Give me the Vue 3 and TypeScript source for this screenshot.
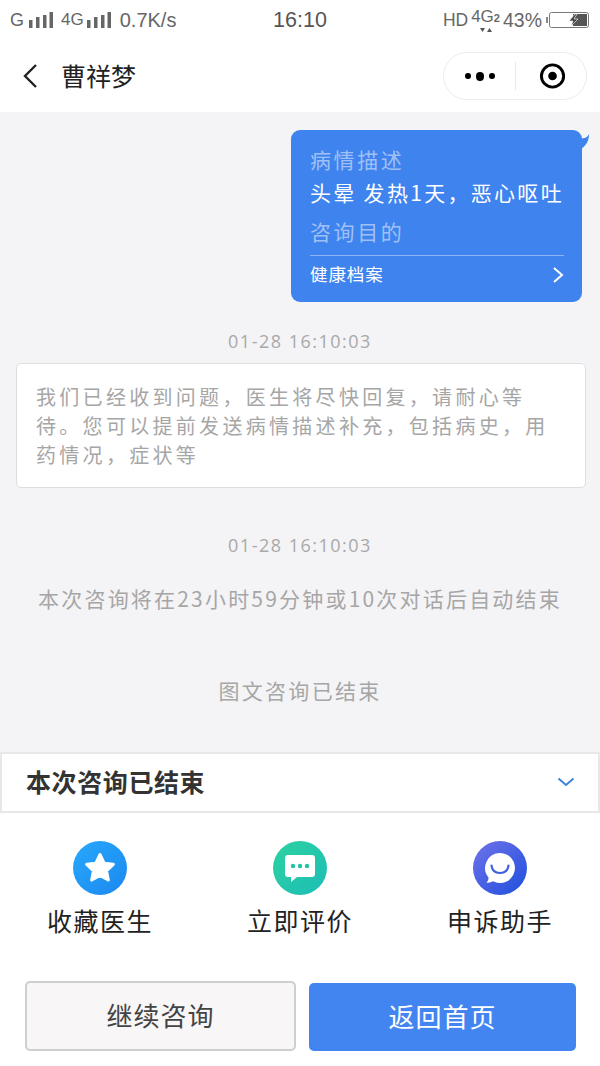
<script setup lang="ts">
const actions = [
  { label: '收藏医生', icon: 'star' },
  { label: '立即评价', icon: 'talk' },
  { label: '申诉助手', icon: 'smile' },
]
</script>

<template>
  <div class="page">
    <div class="status">
      <div class="st-left">
        <span>G</span>
        <svg class="bars" width="24" height="18" viewBox="0 0 24 18"><path d="M0 9h3.500v8H0zM7 6h3.500v11H7zM14 4h3.500v13H14zM20.500 1H24v16h-3.500z" fill="#666"/></svg>
        <span class="four">4G</span>
        <svg class="bars" width="24" height="18" viewBox="0 0 24 18"><path d="M0 9h3.500v8H0zM7 6h3.500v11H7zM14 4h3.500v13H14zM20.500 1H24v16h-3.500z" fill="#666"/></svg>
        <span class="speed">0.7K/s</span>
      </div>
      <div class="st-time">16:10</div>
      <div class="st-right">
        <span class="hd">HD</span>
        <span class="net">4G<small>2</small>
          <svg class="arrows" width="12" height="6" viewBox="0 0 12 6"><path d="M0 1h5L2.500 5zM7 5h5L9.500 1z" fill="#555"/></svg>
        </span>
        <span class="pct">43%</span>
        <svg class="battery" width="44" height="18" viewBox="0 0 44 18">
          <rect x="0" y="6" width="2" height="6" fill="#888"/>
          <rect x="3.500" y="1.500" width="39" height="15" rx="2" fill="#fff" stroke="#777"/>
          <rect x="27" y="3" width="14" height="12" fill="#555"/>
          <path d="M29 3l-6 7h4l-2 5 7-7h-4l3-5z" fill="#444" stroke="#fff" stroke-width=".6"/>
        </svg>
      </div>
    </div>

    <header class="nav">
      <svg class="back" width="16" height="26" viewBox="0 0 16 26"><path d="M14 2 3 13l11 11" fill="none" stroke="#222" stroke-width="2.400"/></svg>
      <span class="title">曹祥梦</span>
      <div class="capsule">
        <div class="dots"><i></i><i class="big"></i><i></i></div>
        <span class="sep"></span>
        <svg width="28" height="28" viewBox="0 0 28 28"><circle cx="14" cy="14" r="11.500" fill="none" stroke="#000" stroke-width="3"/><circle cx="14" cy="14" r="4.500" fill="#000"/></svg>
      </div>
    </header>

    <main class="thread">
      <div class="bubble">
        <div class="b-label">病情描述</div>
        <div class="b-text">头晕 发热1天，恶心呕吐</div>
        <div class="b-label second">咨询目的</div>
        <div class="b-foot">
          <span>健康档案</span>
          <svg class="go" width="12" height="18" viewBox="0 0 12 18"><path d="M2 2l8 7-8 7" fill="none" stroke="#fff" stroke-width="2"/></svg>
        </div>
        <svg class="tail" width="10" height="16" viewBox="0 0 10 16"><path d="M0 5C3 6 6 5 8 1 8 7 6 12 0 16z" fill="#3f83ee"/></svg>
      </div>

      <div class="stamp first">01-28 16:10:03</div>
      <div class="card">我们已经收到问题，医生将尽快回复，请耐心等待。您可以提前发送病情描述补充，包括病史，用药情况，症状等</div>
      <div class="stamp second">01-28 16:10:03</div>
      <div class="note">本次咨询将在23小时59分钟或10次对话后自动结束</div>
      <div class="ended">图文咨询已结束</div>
    </main>

    <div class="finish">
      <span>本次咨询已结束</span>
      <svg width="18" height="10" viewBox="0 0 18 10"><path d="M1.500 1.500 9 8l7.500-6.500" fill="none" stroke="#3f83d8" stroke-width="2"/></svg>
    </div>

    <section class="actions">
      <div v-for="a in actions" :key="a.label" class="action">
        <div class="ic" :class="a.icon">
          <svg v-if="a.icon === 'star'" width="36" height="36" viewBox="0 0 34 34"><path d="M17 4.500l3.800 8 8.700 1.100-6.400 6 1.700 8.700L17 24l-7.800 4.300 1.700-8.700-6.400-6 8.700-1.100z" fill="#fff" stroke="#fff" stroke-width="3" stroke-linejoin="round"/></svg>
          <svg v-else-if="a.icon === 'talk'" width="34" height="30" viewBox="0 0 34 30"><path d="M5 2h24a3 3 0 0 1 3 3v16a3 3 0 0 1-3 3H14l-6 5v-5H5a3 3 0 0 1-3-3V5a3 3 0 0 1 3-3z" fill="#fff"/><circle cx="10" cy="13" r="2.200" fill="#22c4a6"/><circle cx="17" cy="13" r="2.200" fill="#22c4a6"/><circle cx="24" cy="13" r="2.200" fill="#22c4a6"/></svg>
          <svg v-else width="34" height="34" viewBox="0 0 34 34"><path d="M17 2a15 15 0 1 1-7 28.300C8 31.500 5.500 32 3.500 31.500 5 30 5.700 28 5.500 26.500A15 15 0 0 1 17 2z" fill="#fff"/><path d="M8.500 14.500c.5 5 4 7.500 8.500 7.500s8-2.500 8.500-7.500" fill="none" stroke="#3d5fe0" stroke-width="2.200" stroke-linecap="round"/></svg>
        </div>
        <div class="a-label">{{ a.label }}</div>
      </div>
    </section>

    <footer class="btns">
      <div class="btn ghost">继续咨询</div>
      <div class="btn primary">返回首页</div>
    </footer>
  </div>
</template>

<style scoped>
.page {
  width: 600px;
  height: 1066px;
  overflow: hidden;
  background: #fff;
  display: flex;
  flex-direction: column;
  font-family: "Noto Sans CJK SC", "Noto Sans", sans-serif;
}
.status {
  height: 40px;
  flex: none;
  display: grid;
  grid-template-columns: 1fr auto 1fr;
  align-items: center;
  padding: 0 10px;
  color: #666;
  font-family: "Liberation Sans", sans-serif;
  font-size: 18px;
}
.st-left { display: flex; align-items: center; gap: 5px; }
.four { font-size: 17px; margin-left: 3px; margin-right: -2px; }
.speed { margin-left: 4px; font-size: 20px; }
.bars { display: block; }
.st-time { font-size: 21.500px; color: #555; }
.st-right { display: flex; align-items: center; justify-content: flex-end; gap: 3px; }
.hd { font-size: 17.500px; }
.net { position: relative; font-size: 17px; padding-bottom: 6px; }
.net small { font-size: 11px; font-weight: 700; }
.arrows { position: absolute; left: 9px; bottom: 0; }
.pct { font-size: 19.500px; }
.st-right .battery { margin-left: 1px; }

.nav {
  height: 72px;
  flex: none;
  display: flex;
  align-items: center;
  padding: 0 13px 0 22px;
}
.title { margin-left: 23px; margin-bottom: 3px; font-size: 25px; color: #222; }
.capsule {
  margin-left: auto;
  width: 144px;
  height: 48px;
  box-sizing: border-box;
  border: 1px solid #ececec;
  border-radius: 24px;
  display: flex;
  align-items: center;
  padding: 0 20px 0 21px;
}
.dots { display: flex; align-items: center; gap: 5px; width: 30px; }
.dots i { width: 6px; height: 6px; border-radius: 50%; background: #000; }
.dots i.big { width: 9px; height: 9px; }
.sep { width: 1px; height: 28px; background: #e8e8e8; margin: 0 23px 0 20px; }

.thread {
  flex: 1;
  background: #f4f4f6;
  display: flex;
  flex-direction: column;
  padding-top: 18px;
}
.bubble {
  position: relative;
  align-self: flex-end;
  width: 291px;
  height: 172px;
  box-sizing: border-box;
  margin-right: 18px;
  padding: 14px 18px 0 19px;
  border-radius: 9px;
  background: #3f83ee;
  color: #fff;
  font-size: 21px;
  letter-spacing: 2.600px;
}
.b-label { color: #9fc0f6; line-height: 31px; height: 31px; }
.b-text { line-height: 35px; height: 35px; white-space: nowrap; letter-spacing: 2.300px; }
.b-label.second { margin-top: 6px; }
.b-foot {
  margin-top: 8px;
  border-top: 1px solid #8db4f3;
  height: 38px;
  display: flex;
  align-items: center;
  justify-content: space-between;
  font-size: 17.500px;
  letter-spacing: 0.900px;
  padding-bottom: 3px;
  box-sizing: border-box;
}
.go { margin-top: 3px; }
.tail { position: absolute; right: -9px; top: 3px; }

.stamp {
  text-align: center;
  font-family: "Open Sans", sans-serif;
  font-size: 18px;
  letter-spacing: 1.500px;
  color: #a9a9a9;
  line-height: 24px;
}
.stamp.first { margin-top: 27px; }
.stamp.second { margin-top: 45px; }
.card {
  margin: 10px 14px 0 16px;
  height: 125px;
  box-sizing: border-box;
  padding: 18px 20px 0 19px;
  background: #fff;
  border: 1px solid #dedede;
  border-radius: 5px;
  color: #a6a6a6;
  font-size: 20px;
  line-height: 29px;
  letter-spacing: 3.300px;
}
.note {
  margin-top: 26px;
  text-align: center;
  color: #a6a6a6;
  font-size: 21px;
  line-height: 30px;
  letter-spacing: 2.200px;
  white-space: nowrap;
}
.ended {
  margin-top: 62px;
  text-align: center;
  color: #a6a6a6;
  font-size: 21px;
  line-height: 30px;
  letter-spacing: 2.300px;
}
.finish {
  flex: none;
  height: 61px;
  box-sizing: border-box;
  border: 2px solid #e8e8e8;
  background: #fff;
  display: flex;
  align-items: center;
  justify-content: space-between;
  padding: 0 23px 4px 24px;
  font-size: 25px;
  font-weight: 700;
  letter-spacing: 0.600px;
  color: #333;
}
.finish svg { margin-top: 2px; }
.actions {
  flex: none;
  height: 168px;
  display: grid;
  grid-template-columns: repeat(3, 1fr);
  padding-top: 28px;
  box-sizing: border-box;
}
.action { display: flex; flex-direction: column; align-items: center; }
.ic {
  width: 54px;
  height: 54px;
  border-radius: 50%;
  display: flex;
  align-items: center;
  justify-content: center;
}
.ic.star { background: linear-gradient(135deg, #28a8fb, #1b88f0); }
.ic.talk { background: linear-gradient(135deg, #2dd2a0, #1cbdb6); }
.ic.smile { background: linear-gradient(135deg, #7172ea, #1d4fdc); }
.a-label {
  margin-top: 7px;
  font-size: 25px;
  line-height: 36px;
  letter-spacing: 1.500px;
  color: #222;
  white-space: nowrap;
}
.btns {
  flex: none;
  height: 85px;
  display: flex;
  gap: 13px;
  padding: 0 24px 0 25px;
  box-sizing: border-box;
}
.btn {
  height: 68px;
  display: flex;
  align-items: center;
  justify-content: center;
  box-sizing: border-box;
  border-radius: 5px;
  padding-bottom: 3px;
  font-size: 26px;
  letter-spacing: 1px;
}
.ghost {
  width: 271px;
  height: 70px;
  background: #f8f6f7;
  border: 2px solid #cfcfcf;
  color: #444;
}
.primary {
  width: 267px;
  margin-top: 2px;
  background: #4285f0;
  color: #fff;
}
</style>
